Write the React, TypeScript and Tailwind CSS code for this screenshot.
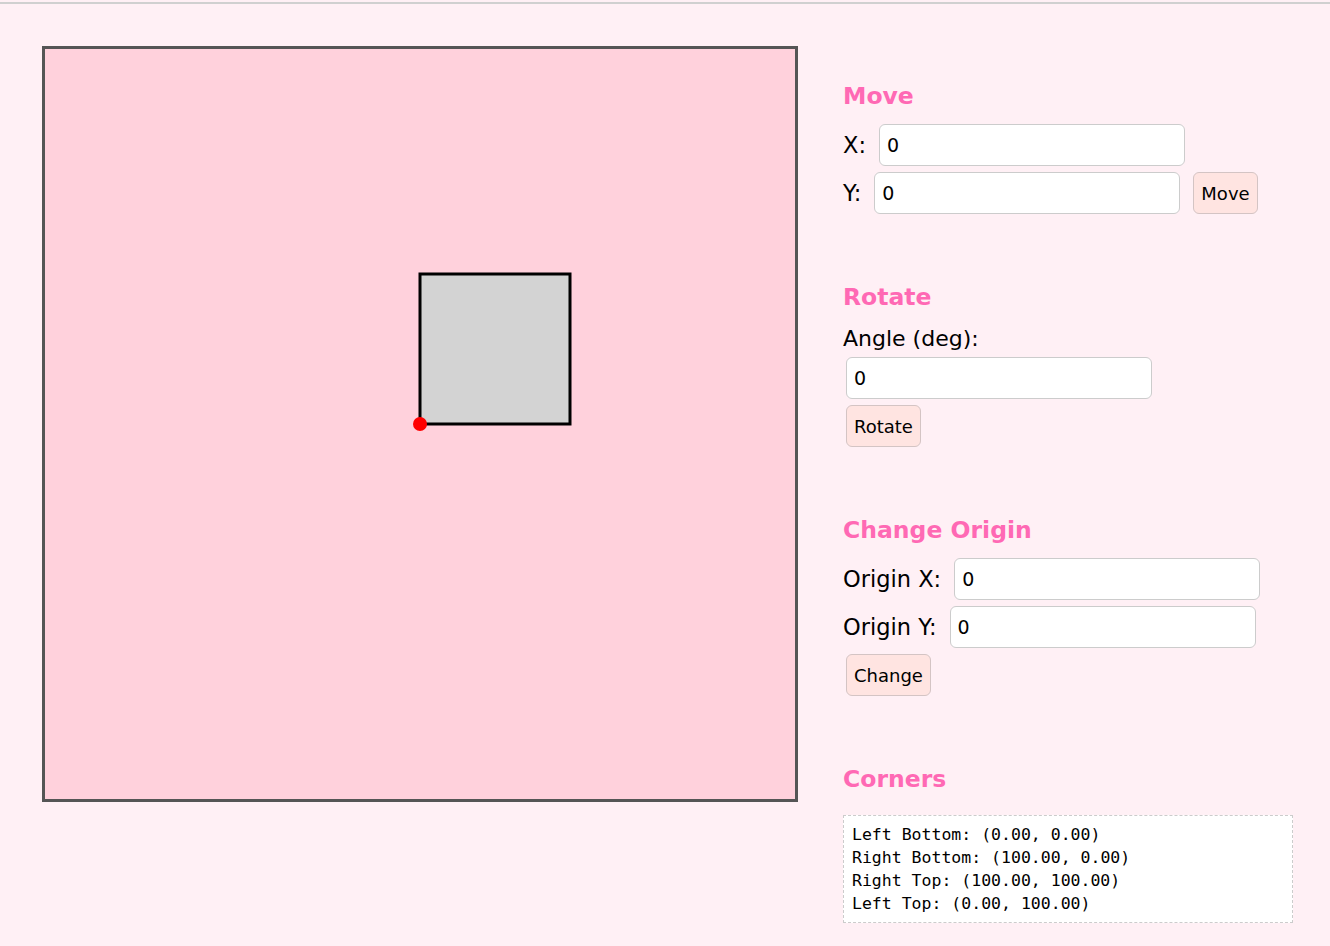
import { useState } from "react";

const SCALE = 1.5;
const SIZE = 750;

type Pt = { x: number; y: number };

function Field({ label, value, onChange }: { label: string; value: string; onChange: (v: string) => void }) {
  return (
    <div className="flex items-center">
      <label className="mr-[13px] text-[22.5px] leading-[28px] text-black">{label}</label>
      <input
        value={value}
        onChange={(e) => onChange(e.target.value)}
        className="h-[42px] w-[306px] rounded-[6px] border border-[#cccccc] bg-white px-[7px] text-[19px] text-black outline-none"
      />
    </div>
  );
}

function Btn({ children, className }: { children: string; className?: string }) {
  return (
    <button className={"h-[42px] rounded-[6px] border border-[#d4c4c4] bg-[#ffe4e1] px-[7px] text-[18px] text-black " + (className ?? "")}>
      {children}
    </button>
  );
}

export default function App() {
  const [mx, setMx] = useState("0");
  const [my, setMy] = useState("0");
  const [angle, setAngle] = useState("0");
  const [ox, setOx] = useState("0");
  const [oy, setOy] = useState("0");

  const corners: Pt[] = [
    { x: 0, y: 0 },
    { x: 100, y: 0 },
    { x: 100, y: 100 },
    { x: 0, y: 100 },
  ];
  const toSvg = (p: Pt) => `${SIZE / 2 + p.x * SCALE},${SIZE / 2 - p.y * SCALE}`;
  const names = ["Left Bottom", "Right Bottom", "Right Top", "Left Top"];

  return (
    <div className="min-h-[946px] bg-[#fff0f5]" style={{ fontFamily: '"DejaVu Sans", sans-serif' }}>
      <div className="h-[2px]" />
      <div className="h-[2px] bg-[#d0d0d0]" />
      <div className="flex items-start gap-[45px] pl-[42px] pt-[42px]">
        <div className="border-[3px] border-[#555555] bg-[#ffd1dc]">
          <svg width={SIZE} height={SIZE} className="block">
            <polygon points={corners.map(toSvg).join(" ")} fill="#d3d3d3" stroke="#000" strokeWidth={3} />
            <circle cx={SIZE / 2} cy={SIZE / 2} r={7} fill="red" />
          </svg>
        </div>

        <div className="flex w-[450px] flex-col pt-[34px]">
          <h2 className="mb-[12px] text-[23.5px] font-bold leading-[32px] text-[#ff69b4]">Move</h2>
          <Field label="X:" value={mx} onChange={setMx} />
          <div className="mt-[6px] flex items-center">
            <Field label="Y:" value={my} onChange={setMy} />
            <Btn className="ml-[13px]">Move</Btn>
          </div>

          <h2 className="mt-[67px] text-[23.5px] font-bold leading-[32px] text-[#ff69b4]">Rotate</h2>
          <label className="mt-[12px] text-[22px] leading-[28px] text-black">Angle (deg):</label>
          <input
            value={angle}
            onChange={(e) => setAngle(e.target.value)}
            className="ml-[3px] mt-[4px] h-[42px] w-[306px] rounded-[6px] border border-[#cccccc] bg-white px-[7px] text-[19px] text-black outline-none"
          />
          <div className="ml-[3px] mt-[6px]">
            <Btn>Rotate</Btn>
          </div>

          <h2 className="mb-[12px] mt-[67px] text-[23.5px] font-bold leading-[32px] text-[#ff69b4]">Change Origin</h2>
          <Field label="Origin X:" value={ox} onChange={setOx} />
          <div className="mt-[6px]">
            <Field label="Origin Y:" value={oy} onChange={setOy} />
          </div>
          <div className="ml-[3px] mt-[6px]">
            <Btn>Change</Btn>
          </div>

          <h2 className="mt-[67px] text-[23.5px] font-bold leading-[32px] text-[#ff69b4]">Corners</h2>
          <div
            className="mt-[20px] border border-dashed border-[#cccccc] bg-white px-[8px] py-[7px] text-[16.5px] leading-[23px] text-black"
            style={{ fontFamily: '"DejaVu Sans Mono", monospace' }}
          >
            {corners.map((c, i) => (
              <div key={i} className="whitespace-pre">
                {names[i]}: ({c.x.toFixed(2)}, {c.y.toFixed(2)})
              </div>
            ))}
          </div>
        </div>
      </div>
    </div>
  );
}
